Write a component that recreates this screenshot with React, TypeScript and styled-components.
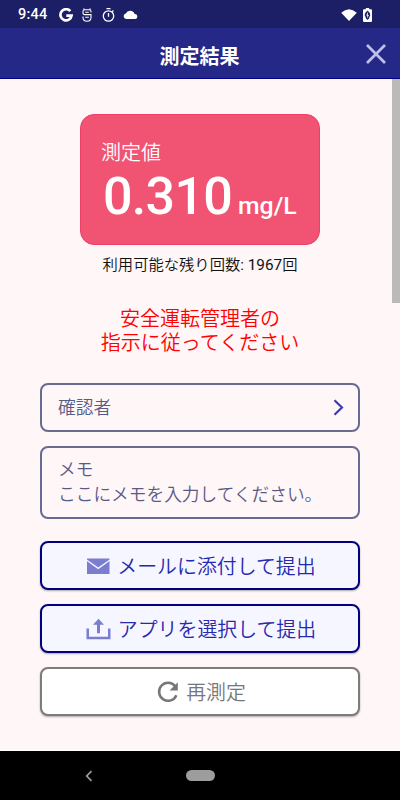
import React from 'react';
import styled, { createGlobalStyle, css } from 'styled-components';

const GlobalStyle = createGlobalStyle`
  *, *::before, *::after { box-sizing: border-box; }
  body {
    margin: 0;
    font-family: Roboto, "Noto Sans CJK JP", sans-serif;
    font-weight: 350;
  }
  button, textarea { font: inherit; }
`;

const Screen = styled.div`
  display: flex;
  flex-direction: column;
  width: 400px;
  height: 800px;
  overflow: hidden;
  background: #fff6f7;
`;

const StatusBar = styled.div`
  display: flex;
  flex: none;
  align-items: center;
  justify-content: space-between;
  height: 28px;
  padding: 1px 28px 0 18px;
  background: #1c1f66;
  color: #fff;
`;

const StatusGroup = styled.div<{ $gap: number }>`
  display: flex;
  align-items: center;
  gap: ${({ $gap }) => $gap}px;
  svg { display: block; }
`;

const Clock = styled.span`
  width: 32px;
  font-family: Roboto, sans-serif;
  font-size: 14.5px;
  font-weight: 500;
  line-height: 28px;
  letter-spacing: 0.2px;
  white-space: nowrap;
`;

const Header = styled.header`
  display: grid;
  flex: none;
  grid-template-columns: 48px 1fr 48px;
  align-items: center;
  height: 51px;
  border-bottom: 1px solid #00008b;
  background: #262888;
`;

const Title = styled.h1`
  grid-column: 2;
  margin: 7px 1px 0 0;
  color: #fff;
  font-size: 20px;
  font-weight: 700;
  line-height: 30px;
  text-align: center;
`;

const CloseButton = styled.button`
  display: grid;
  place-items: center;
  height: 48px;
  margin: 2px 1px 0 0;
  padding: 0;
  border: 0;
  background: none;
`;

const Body = styled.main`
  display: flex;
  flex: 1;
  min-height: 0;
  border-bottom: 1px solid #fff;
`;

const Content = styled.div`
  display: flex;
  flex: 1;
  flex-direction: column;
  align-items: center;
  padding: 35px 32px 0 40px;
`;

const ScrollThumb = styled.div`
  flex: none;
  width: 8px;
  height: 224px;
  background: #bbb9b9;
`;

const ResultCard = styled.section`
  width: 240px;
  height: 131px;
  padding: 23px 20px 0 20px;
  border: 1px solid #ee3f68;
  border-radius: 14px;
  background: #f15472;
  color: #fff;
`;

const ResultLabel = styled.div`
  font-size: 20px;
  line-height: 30px;
`;

const ResultValue = styled.div`
  display: flex;
  align-items: baseline;
  padding-left: 2px;
  font-weight: 500;
  line-height: 58px;
  white-space: nowrap;
`;

const Amount = styled.span`
  width: 135px;
  font-size: 52px;
  letter-spacing: -0.7px;
`;

const Unit = styled.span`
  font-size: 24.8px;
`;

const Remaining = styled.p`
  margin: 9px 0 0;
  color: #111;
  font-size: 15.3px;
  line-height: 22px;
  white-space: nowrap;
`;

const Count = styled.span`
  font-weight: 400;
`;

const Warning = styled.p`
  margin: 31px 0 0;
  color: #f00;
  font-size: 20px;
  line-height: 24px;
  text-align: center;
`;

const field = css`
  width: 320px;
  border: 2px solid #686a91;
  border-radius: 8px;
  color: #595b87;
  font-size: 17.7px;
`;

const SelectField = styled.div`
  ${field}
  display: flex;
  align-items: center;
  justify-content: space-between;
  height: 49px;
  margin-top: 28px;
  padding: 0 14px 1px 16px;
`;

const FieldLabel = styled.span`
  padding-bottom: 3px;
`;

const MemoField = styled.div`
  ${field}
  height: 73px;
  margin-top: 14px;
  padding: 10px 16px;
  line-height: 25px;
`;

const Actions = styled.div`
  display: flex;
  flex-direction: column;
  gap: 14px;
  margin-top: 22px;
`;

const ActionButton = styled.button<{ $muted?: boolean }>`
  display: flex;
  align-items: center;
  justify-content: center;
  gap: 7px;
  width: 320px;
  height: 49px;
  padding: 1px 0 0 ${({ $muted }) => ($muted ? 3 : 2)}px;
  border: 2px solid ${({ $muted }) => ($muted ? '#7c7c7c' : '#000080')};
  border-radius: 8px;
  background: ${({ $muted }) => ($muted ? '#fff' : '#f5f6ff')};
  box-shadow: 0 1px 2px rgba(0, 0, 0, 0.32);
  color: ${({ $muted }) => ($muted ? '#777' : '#2828ae')};
  font-size: 19.9px;
  line-height: 30px;
  svg { flex: none; }
`;

const ActionLabel = styled.span`
  padding-top: 3px;
`;

const NavigationBar = styled.nav`
  display: grid;
  flex: none;
  grid-template-columns: 1fr 28px 1fr;
  align-items: center;
  height: 49px;
  background: #000;
`;

const BackIcon = styled.svg`
  justify-self: center;
  margin-right: 9px;
`;

const HomePill = styled.div`
  width: 29px;
  height: 11px;
  border-radius: 6px;
  background: #9d9d9d;
`;

function GoogleIcon() {
  return (
    <svg width="14" height="14" viewBox="0 0 14 14" fill="none" stroke="#fff" strokeWidth="2.7">
      <path d="M11.3 3.1A5.6 5.6 0 1 0 12.6 7.6H7.3" />
    </svg>
  );
}

function CaptureIcon() {
  return (
    <svg width="12" height="14" viewBox="0 0 12 14" fill="none" stroke="#fff" strokeWidth="1.1">
      <path d="M2.6 0.4 3.4 1.8M9.4 0.4 8.6 1.8M10 4.6V3.5Q10 1.8 8.3 1.8H3.7Q2 1.8 2 3.5V5Q2 6.6 3.6 6.6H10V9.5Q10 13.2 6 13.2T2 9.5V8.6M4.2 4.2H7.8M4.2 9.2H7.8" />
    </svg>
  );
}

function TimerIcon() {
  return (
    <svg width="13" height="14" viewBox="0 0 13 14" fill="none" stroke="#fff" strokeWidth="1.3">
      <circle cx="6.5" cy="8" r="5.2" />
      <path d="M4.5.7h4M6.5 5v3.7M10.2 3.7l1.2-1.1" />
    </svg>
  );
}

function CloudIcon() {
  return (
    <svg width="15" height="9" viewBox="0 0 15 9" fill="#fff">
      <path d="M3 9a2.8 2.8 0 0 1-.2-5.5A4.8 4.8 0 0 1 11.6 4 2.5 2.5 0 0 1 12 9Z" />
    </svg>
  );
}

function WifiIcon() {
  return (
    <svg width="16" height="12" viewBox="0 0 16 12" fill="#fff">
      <path d="M.2 3.8Q8-3.2 15.8 3.8L8 12Z" />
    </svg>
  );
}

function BatteryIcon() {
  return (
    <svg width="9" height="14" viewBox="0 0 9 14">
      <path d="M2.8 0h3.4v1.3H8q1 0 1 1V13q0 1-1 1H1q-1 0-1-1V2.3q0-1 1-1h1.8Z" fill="#fff" />
      <path d="M4.5 2.6Q1.5 5 1.8 7.2L3 10.2l1.5 1.8L6 10.2l1.2-3Q7.5 5 4.5 2.6Z" fill="#1c1f66" />
      <path d="M4.9 3.8 3.2 7.6h1.1v3L5.9 7H4.8Z" fill="#fff" />
    </svg>
  );
}

function MailIcon() {
  return (
    <svg width="24" height="18" viewBox="0 0 24 18">
      <path d="M1 1.5h22.5v15.5H1Z" fill="#7b7dd0" />
      <path d="m.5 3 11.7 8.3L24 3" fill="none" stroke="#f5f6ff" strokeWidth="1.4" />
    </svg>
  );
}

function UploadIcon() {
  return (
    <svg width="25" height="22" viewBox="0 0 25 22" fill="#7b7dd0">
      <path d="M.5 10.5H3v8.3h19v-8.3h2.5v10.8H.5Z" />
      <path d="m12.5.8 5.5 6h-4v8.4h-3V6.8H7Z" />
    </svg>
  );
}

function RefreshIcon() {
  return (
    <svg width="22" height="22" viewBox="0 0 22 22">
      <path d="M18.1 5.1A9 9 0 1 0 19.4 14.2" fill="none" stroke="#777" strokeWidth="2.5" />
      <path d="M20.8 1.2V9.4H12.6Z" fill="#777" />
    </svg>
  );
}

export default function App() {
  return (
    <>
      <GlobalStyle />
      <Screen>
        <StatusBar>
          <StatusGroup $gap={8.6}>
            <Clock>9:44</Clock>
            <GoogleIcon />
            <CaptureIcon />
            <TimerIcon />
            <CloudIcon />
          </StatusGroup>
          <StatusGroup $gap={6}>
            <WifiIcon />
            <BatteryIcon />
          </StatusGroup>
        </StatusBar>
        <Header>
          <Title>測定結果</Title>
          <CloseButton aria-label="閉じる">
            <svg width="20" height="20" viewBox="0 0 20 20" stroke="#c0c1e8" strokeWidth="2.7">
              <path d="m1 1 18 18M19 1 1 19" />
            </svg>
          </CloseButton>
        </Header>
        <Body>
          <Content>
            <ResultCard>
              <ResultLabel>測定値</ResultLabel>
              <ResultValue>
                <Amount>0.310</Amount>
                <Unit>mg/L</Unit>
              </ResultValue>
            </ResultCard>
            <Remaining>
              利用可能な残り回数<Count>: 1967</Count>回
            </Remaining>
            <Warning>
              安全運転管理者の
              <br />
              指示に従ってください
            </Warning>
            <SelectField>
              <FieldLabel>確認者</FieldLabel>
              <svg width="11" height="17" viewBox="0 0 11 17" fill="none" stroke="#3c3cae" strokeWidth="2.2">
                <path d="m1.5 1.2 7.5 7.3-7.5 7.3" />
              </svg>
            </SelectField>
            <MemoField>
              メモ
              <br />
              ここにメモを入力してください。
            </MemoField>
            <Actions>
              <ActionButton>
                <MailIcon />
                <ActionLabel>メールに添付して提出</ActionLabel>
              </ActionButton>
              <ActionButton>
                <UploadIcon />
                <ActionLabel>アプリを選択して提出</ActionLabel>
              </ActionButton>
              <ActionButton $muted>
                <RefreshIcon />
                <ActionLabel>再測定</ActionLabel>
              </ActionButton>
            </Actions>
          </Content>
          <ScrollThumb />
        </Body>
        <NavigationBar>
          <BackIcon width="8" height="12" viewBox="0 0 8 12" fill="none" stroke="#9d9d9d" strokeWidth="1.7">
            <path d="M6.5 1.2 1.7 6l4.8 4.8" />
          </BackIcon>
          <HomePill />
        </NavigationBar>
      </Screen>
    </>
  );
}
